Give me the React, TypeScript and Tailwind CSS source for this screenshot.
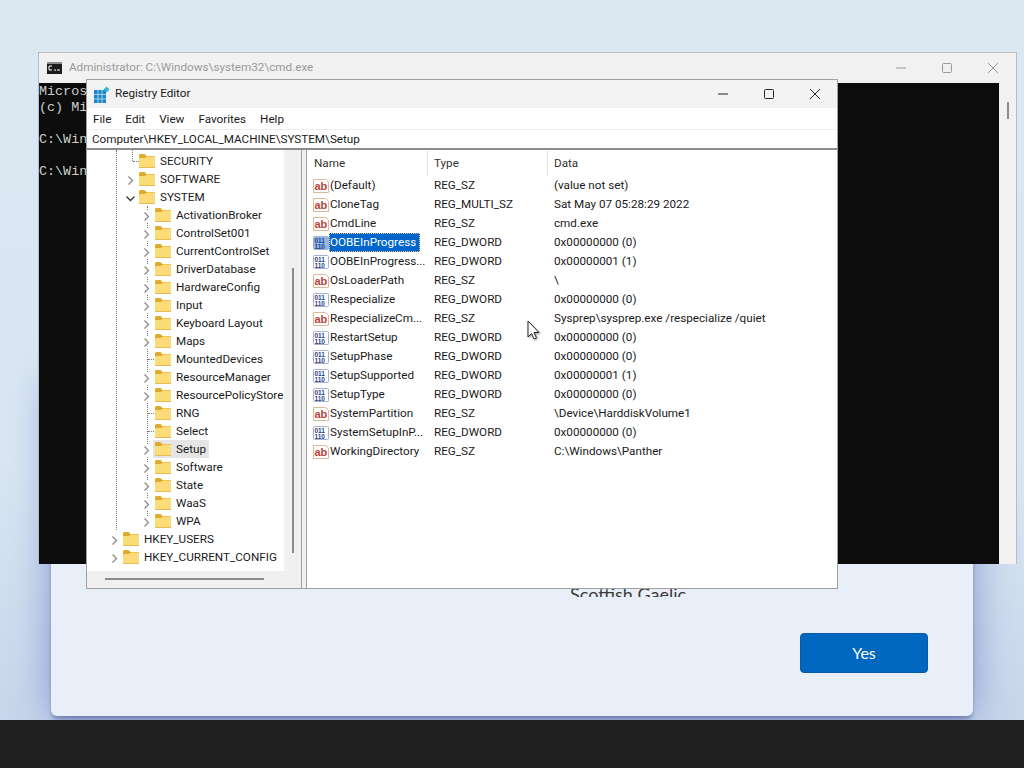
const tree = [
  { label: 'SECURITY', depth: 1, chevron: '', stub: true },
  { label: 'SOFTWARE', depth: 1, chevron: 'right' },
  { label: 'SYSTEM', depth: 1, chevron: 'down' },
  { label: 'ActivationBroker', depth: 2, chevron: 'right' },
  { label: 'ControlSet001', depth: 2, chevron: 'right' },
  { label: 'CurrentControlSet', depth: 2, chevron: 'right' },
  { label: 'DriverDatabase', depth: 2, chevron: 'right' },
  { label: 'HardwareConfig', depth: 2, chevron: 'right' },
  { label: 'Input', depth: 2, chevron: 'right' },
  { label: 'Keyboard Layout', depth: 2, chevron: 'right' },
  { label: 'Maps', depth: 2, chevron: 'right' },
  { label: 'MountedDevices', depth: 2, chevron: '', stub: true },
  { label: 'ResourceManager', depth: 2, chevron: 'right' },
  { label: 'ResourcePolicyStore', depth: 2, chevron: 'right' },
  { label: 'RNG', depth: 2, chevron: '', stub: true },
  { label: 'Select', depth: 2, chevron: '', stub: true },
  { label: 'Setup', depth: 2, chevron: 'right', active: true },
  { label: 'Software', depth: 2, chevron: 'right' },
  { label: 'State', depth: 2, chevron: 'right' },
  { label: 'WaaS', depth: 2, chevron: 'right' },
  { label: 'WPA', depth: 2, chevron: 'right' },
  { label: 'HKEY_USERS', depth: 0, chevron: 'right' },
  { label: 'HKEY_CURRENT_CONFIG', depth: 0, chevron: 'right' },
];

const values = [
  { name: '(Default)', type: 'REG_SZ', data: '(value not set)', kind: 'sz' },
  { name: 'CloneTag', type: 'REG_MULTI_SZ', data: 'Sat May 07 05:28:29 2022', kind: 'sz' },
  { name: 'CmdLine', type: 'REG_SZ', data: 'cmd.exe', kind: 'sz' },
  { name: 'OOBEInProgress', type: 'REG_DWORD', data: '0x00000000 (0)', kind: 'bin', selected: true },
  { name: 'OOBEInProgress...', type: 'REG_DWORD', data: '0x00000001 (1)', kind: 'bin' },
  { name: 'OsLoaderPath', type: 'REG_SZ', data: '\\', kind: 'sz' },
  { name: 'Respecialize', type: 'REG_DWORD', data: '0x00000000 (0)', kind: 'bin' },
  { name: 'RespecializeCm...', type: 'REG_SZ', data: 'Sysprep\\sysprep.exe /respecialize /quiet', kind: 'sz' },
  { name: 'RestartSetup', type: 'REG_DWORD', data: '0x00000000 (0)', kind: 'bin' },
  { name: 'SetupPhase', type: 'REG_DWORD', data: '0x00000000 (0)', kind: 'bin' },
  { name: 'SetupSupported', type: 'REG_DWORD', data: '0x00000001 (1)', kind: 'bin' },
  { name: 'SetupType', type: 'REG_DWORD', data: '0x00000000 (0)', kind: 'bin' },
  { name: 'SystemPartition', type: 'REG_SZ', data: '\\Device\\HarddiskVolume1', kind: 'sz' },
  { name: 'SystemSetupInP...', type: 'REG_DWORD', data: '0x00000000 (0)', kind: 'bin' },
  { name: 'WorkingDirectory', type: 'REG_SZ', data: 'C:\\Windows\\Panther', kind: 'sz' },
];

function Folder() {
  return (
    <svg width="16" height="14" viewBox="0 0 16 14" className="shrink-0">
      <path d="M0 1.5 Q0 0 1.5 0 H5.5 L7.5 2 H16 V14 H0 Z" fill="#e2a92f" />
      <path d="M0 4 L6 4 L8 2.5 H16 V14 H0 Z" fill="#fcdc78" />
      <path d="M0 13 H16 V14 H0 Z" fill="#eabb52" />
    </svg>
  );
}

function Chevron({ dir }: { dir: string }) {
  if (!dir) return <span className="w-[9px] shrink-0" />;
  return (
    <svg width="9" height="13" viewBox="0 0 9 13" className="relative shrink-0 mt-[2px] bg-white">
      <path
        d={dir === 'down' ? 'M0.5 4.5 L4.5 8.5 L8.5 4.5' : 'M2.5 2.5 L6.5 6.5 L2.5 10.5'}
        fill="none"
        stroke={dir === 'down' ? '#333' : '#8a8a8a'}
        strokeWidth="1.3"
      />
    </svg>
  );
}

function ValueIcon({ kind, selected }: { kind: string; selected?: boolean }) {
  if (kind === 'sz') {
    return (
      <svg width="16" height="16" viewBox="0 0 16 16" className="shrink-0">
        <path d="M0.5 1.5 H12.5 L15.5 4 V14.5 H0.5 Z" fill="#fff" stroke="#e0b898" />
        <text x="1.5" y="11.5" fontSize="11" fontWeight="700" fontFamily="'Liberation Sans', sans-serif" fill="#b8423a">ab</text>
      </svg>
    );
  }
  return (
    <svg width="16" height="16" viewBox="0 0 16 16" className="shrink-0">
      <rect x="0.5" y="1.5" width="15" height="13" rx="1" fill={selected ? '#8fb8e6' : '#fff'} stroke="#a9b2cc" />
      <text x="1.5" y="7.5" fontSize="6.5" fontWeight="700" fontFamily="'Liberation Sans', sans-serif" fill="#27408b">011</text>
      <text x="1.5" y="13.5" fontSize="6.5" fontWeight="700" fontFamily="'Liberation Sans', sans-serif" fill="#27408b">110</text>
    </svg>
  );
}

function RegistryIcon() {
  return (
    <svg width="16" height="17" viewBox="0 0 16 17">
      <rect x="0" y="4" width="12" height="13" fill="#1a86c8" />
      <path d="M4 4 V17 M8 4 V17 M0 8.5 H12 M0 13 H12" stroke="#bfe3f5" strokeWidth="0.8" />
      <path d="M12.5 0.5 L15.5 3.5 L12.5 6.5 L9.5 3.5 Z" fill="#38b6d8" />
    </svg>
  );
}

export default function App() {
  return (
    <div className="relative w-[1024px] h-[768px] overflow-hidden bg-[linear-gradient(to_bottom,#dbe8f2_0%,#d9e6f2_60%,#c5d3ea_100%)] font-['Roboto',sans-serif]">
      {/* setup dialog behind everything */}
      <div className="absolute left-[51px] top-[380px] w-[922px] h-[336px] flex flex-col justify-end pb-[43px] rounded-b-md bg-[#e9eff8] shadow-[0_0_40px_rgba(80,100,190,0.6),0_4px_4px_-1px_rgba(70,80,120,0.6)]">
        <div className="h-[15px] mb-[36px] pl-[519px] overflow-hidden text-[18px] leading-[24px] text-[#3a3a3a] font-['Lato',sans-serif]">
          Scottish Gaelic
        </div>
        <button className="self-end mr-[45px] w-[128px] h-[40px] rounded border border-[#0a5aa8] bg-[#0067c0] text-[16px] text-white font-['Lato',sans-serif]">
          Yes
        </button>
      </div>

      {/* taskbar strip */}
      <div className="absolute left-0 right-0 bottom-0 h-[48px] bg-[#202020]" />

      {/* cmd window */}
      <div className="absolute left-[38px] top-[52px] w-[979px] h-[512px] flex flex-col bg-[#f1f1f1] border border-[#b5bcc4] border-b-0">
        <div className="h-[30px] flex items-center pl-[8px] shrink-0">
          <svg width="15" height="12" viewBox="0 0 15 12" className="shrink-0">
            <rect width="15" height="12" fill="#1a1a1a" />
            <rect y="0" width="15" height="2" fill="#8a8a8a" />
            <path d="M2 4 H5 M2 4 V8 M2 8 H5 M7 8 H9 M10 8 H13" stroke="#fff" strokeWidth="1" />
          </svg>
          <span className="ml-[7px] text-[11.7px] text-[#9a9a9a]">Administrator: C:\Windows\system32\cmd.exe</span>
          <div className="ml-auto flex items-center gap-[34px] pr-[17px]">
            <svg width="12" height="12" viewBox="0 0 12 12"><path d="M1 6 H11" stroke="#9a9a9a" /></svg>
            <svg width="12" height="12" viewBox="0 0 12 12"><rect x="1.5" y="1.5" width="9" height="9" rx="1" fill="none" stroke="#9a9a9a" /></svg>
            <svg width="12" height="12" viewBox="0 0 12 12"><path d="M1 1 L11 11 M11 1 L1 11" stroke="#9a9a9a" /></svg>
          </div>
        </div>
        <div className="flex flex-1 min-h-0">
          <div className="w-[960px] pt-[1px] bg-[#0c0c0c] text-[#cccccc] font-['Liberation_Mono',monospace] text-[13.4px] leading-[16px] whitespace-pre">
            {'Microsoft Windows\n(c) Microsoft\n\nC:\\Windows\n\nC:\\Windows'}
          </div>
          <div className="flex-1 flex justify-center pt-[19px]">
            <div className="w-[2px] h-[17px] bg-[#8c8c8c]" />
          </div>
        </div>
      </div>

      {/* regedit window */}
      <div className="absolute left-[86px] top-[79px] w-[752px] h-[510px] flex flex-col bg-white border border-[#a0a0a0] text-[#1a1a1a] text-[11.7px]">
        <div className="h-[28px] shrink-0 flex items-center pl-[7px] bg-[#f3f3f3]">
          <RegistryIcon />
          <span className="ml-[5px]">Registry Editor</span>
          <div className="ml-auto flex items-center gap-[34px] pr-[16px]">
            <svg width="12" height="12" viewBox="0 0 12 12"><path d="M1 6 H11" stroke="#222" /></svg>
            <svg width="12" height="12" viewBox="0 0 12 12"><rect x="1.5" y="1.5" width="9" height="9" rx="1" fill="none" stroke="#222" /></svg>
            <svg width="12" height="12" viewBox="0 0 12 12"><path d="M1 1 L11 11 M11 1 L1 11" stroke="#222" /></svg>
          </div>
        </div>
        <div className="h-[21px] shrink-0 flex items-center gap-[14px] pl-[6px] pt-[2px]">
          <span>File</span><span>Edit</span><span>View</span><span>Favorites</span><span>Help</span>
        </div>
        <div className="h-[21px] shrink-0 flex items-center pl-[5px] pt-[1px] border-t border-[#ececec] border-b-2 border-b-[#8c8c8c]">
          Computer\HKEY_LOCAL_MACHINE\SYSTEM\Setup
        </div>
        <div className="flex flex-1 min-h-0 bg-[#f0f0f0]">
          <div className="w-[215px] shrink-0 flex flex-col bg-[#f0f0f0] border-r border-[#a0a0a0]">
            <div className="flex flex-1 min-h-0">
              <div className="relative w-[197px] shrink-0 pt-[2px] bg-white leading-[18px] overflow-hidden">
                {/* tree guide lines */}
                <div className="absolute left-[29px] top-0 h-[380px] border-l border-dotted border-[#777]" />
                <div className="absolute left-[45px] top-0 h-[11px] border-l border-dotted border-[#777]" />
                <div className="absolute left-[60px] top-[56px] h-[314px] border-l border-dotted border-[#777]" />
                {tree.map((row) => (
                  <div
                    key={row.label}
                    className={`relative h-[18px] flex items-center ${row.depth === 0 ? 'pl-[23px]' : row.depth === 1 ? 'pl-[39px]' : 'pl-[55px]'}`}
                  >
                    <Chevron dir={row.chevron} />
                    {row.stub && (
                      <div className={`absolute w-[6px] border-t border-dotted border-[#777] ${row.depth === 1 ? 'left-[46px]' : 'left-[61px]'}`} />
                    )}
                    <div className={`h-[18px] flex items-center ${row.active ? 'ml-[2px] pl-[2px] pr-[3px] bg-[#e5e5e5]' : 'ml-[4px]'}`}>
                      <Folder />
                      <span className="ml-[5px] whitespace-nowrap">{row.label}</span>
                    </div>
                  </div>
                ))}
              </div>
              <div className="flex-1 flex justify-center pt-[118px]">
                <div className="w-[2px] h-[285px] bg-[#8c8c8c]" />
              </div>
            </div>
            <div className="h-[17px] shrink-0 pl-[18px] pt-[7px]">
              <div className="w-[159px] h-[2px] bg-[#8c8c8c]" />
            </div>
          </div>
          <div className="w-[4px] shrink-0" />
          <div className="flex-1 bg-white border-l border-[#a0a0a0]">
            <div className="h-[26px] flex items-stretch text-[#333]">
              <span className="w-[121px] pl-[7px] pt-[1px] flex items-center border-r border-[#e5e5e5]">Name</span>
              <span className="w-[120px] pl-[6px] pt-[1px] flex items-center border-r border-[#e5e5e5]">Type</span>
              <span className="pl-[6px] pt-[1px] flex items-center">Data</span>
            </div>
            {values.map((row) => (
              <div key={row.name} className="h-[19px] flex items-center">
                <div className="w-[121px] h-full flex items-center pl-[6px]">
                  <ValueIcon kind={row.kind} selected={row.selected} />
                  <span className={`h-full flex items-center pl-[1px] pr-[4px] whitespace-nowrap ${row.selected ? 'bg-[#0066cc] text-white outline-1 outline-dotted -outline-offset-1 outline-[#f2c58a]' : ''}`}>{row.name}</span>
                </div>
                <span className="w-[120px] pl-[6px]">{row.type}</span>
                <span className="pl-[6px] whitespace-nowrap">{row.data}</span>
              </div>
            ))}
          </div>
        </div>
      </div>

      {/* mouse pointer */}
      <svg width="14" height="21" viewBox="0 0 14 21" className="absolute left-[527px] top-[320px] drop-shadow-[1px_1px_1px_rgba(0,0,0,0.35)]">
        <path d="M1 1 V17 L4.5 13.5 L7 19 L9.5 18 L7 12.5 H12 Z" fill="#fff" stroke="#222" strokeWidth="1" />
      </svg>
    </div>
  );
}
